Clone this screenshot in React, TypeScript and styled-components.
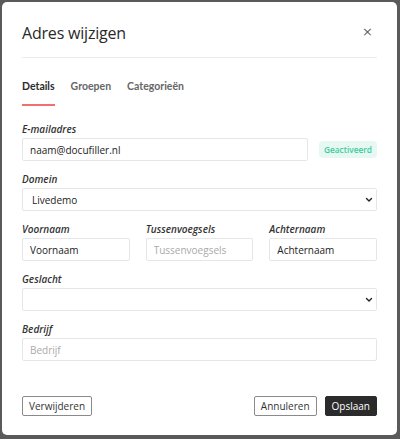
import React from "react";
import styled, { createGlobalStyle } from "styled-components";

const Global = createGlobalStyle`
  html, body { margin: 0; padding: 0; }
  body {
    background: #5a5a5a;
    font-family: "Open Sans", "Noto Sans", sans-serif;
    color: #222;
  }
  * { box-sizing: border-box; }
`;

const Backdrop = styled.div`
  width: 400px;
  height: 439px;
  padding: 2px 3px 4px 2px;
`;

const Modal = styled.div`
  background: #fff;
  border-radius: 5px;
  height: 100%;
  padding: 0 20px;
  display: flex;
  flex-direction: column;
`;

const Header = styled.div`
  display: flex;
  align-items: center;
  justify-content: space-between;
  height: 56px;
  padding-top: 6px;
  border-bottom: 1px solid #ececec;
`;

const Title = styled.h1`
  margin: 0;
  font-size: 16px;
  font-weight: 500;
  color: #2a2a2a;
  letter-spacing: -0.2px;
`;

const Close = styled.button`
  border: none;
  background: none;
  padding: 0;
  margin-right: 4px;
  margin-top: -3px;
  font-size: 13px;
  color: #666;
  line-height: 1;
  font-family: "DejaVu Sans", sans-serif;
  cursor: pointer;
`;

const Tabs = styled.div`
  display: flex;
  gap: 16px;
  margin-top: 21px;
`;

const Tab = styled.div<{ $active?: boolean }>`
  font-family: "Lato", "Open Sans", sans-serif;
  font-size: 10.5px;
  font-weight: 700;
  color: ${(p) => (p.$active ? "#2b2b2b" : "#666")};
  padding-bottom: 10px;
  line-height: 15px;
  border-bottom: 2px solid ${(p) => (p.$active ? "#f07070" : "transparent")};
`;

const Form = styled.div`
  display: flex;
  flex-direction: column;
  gap: 11px;
  margin-top: 16px;
`;

const Field = styled.div`
  display: flex;
  flex-direction: column;
  gap: 2px;
  min-width: 0;
`;

const Label = styled.label`
  font-size: 10px;
  font-style: italic;
  font-weight: 600;
  color: #333;
  line-height: 14px;
`;

const Row = styled.div<{ $cols?: string; $gap?: number }>`
  display: grid;
  grid-template-columns: ${(p) => p.$cols || "1fr"};
  gap: ${(p) => p.$gap ?? 16}px;
  align-items: end;
`;

const Input = styled.input`
  width: 100%;
  height: 23px;
  border: 1px solid #e6e6e6;
  border-radius: 2px;
  padding: 0 7px;
  font-family: "Open Sans", sans-serif;
  font-size: 10px;
  color: #222;
  outline: none;
  &::placeholder { color: #aaa; }
`;

const SelectBox = styled.div`
  height: 23px;
  border: 1px solid #e6e6e6;
  border-radius: 2px;
  padding: 0 3px 0 9px;
  display: flex;
  align-items: center;
  justify-content: space-between;
  font-size: 10px;
  color: #222;
`;

const Badge = styled.span`
  justify-self: end;
  align-self: center;
  background: #e7f8f2;
  color: #3ccb9f;
  font-size: 8.3px;
  font-weight: 600;
  padding: 2px 5px;
  border-radius: 4px;
  line-height: 13px;
`;

const Footer = styled.div`
  display: flex;
  align-items: center;
  gap: 8px;
  margin-top: auto;
  margin-bottom: 19px;
`;

const Spacer = styled.div`
  flex: 1;
`;

const Button = styled.button<{ $primary?: boolean }>`
  height: 20px;
  padding: 0 6px;
  border-radius: 2px;
  font-family: "Open Sans", sans-serif;
  font-size: 10px;
  border: 1px solid ${(p) => (p.$primary ? "#2b2b2b" : "#8a8a8a")};
  background: ${(p) => (p.$primary ? "#2b2b2b" : "#fff")};
  color: ${(p) => (p.$primary ? "#fff" : "#333")};
  cursor: pointer;
`;

const Chevron = () => (
  <svg width="8" height="6" viewBox="0 0 8 6" fill="none">
    <path d="M1.5 1.5 L4 4 L6.5 1.5" stroke="#222" strokeWidth="1.4" strokeLinecap="round" strokeLinejoin="round" />
  </svg>
);

export default function App() {
  return (
    <>
      <Global />
      <Backdrop>
        <Modal>
          <Header>
            <Title>Adres wijzigen</Title>
            <Close aria-label="Sluiten">×</Close>
          </Header>
          <Tabs>
            <Tab $active>Details</Tab>
            <Tab>Groepen</Tab>
            <Tab>Categorieën</Tab>
          </Tabs>
          <Form>
            <Field>
              <Label>E-mailadres</Label>
              <Row $cols="1fr auto" $gap={11}>
                <Input defaultValue="naam@docufiller.nl" />
                <Badge>Geactiveerd</Badge>
              </Row>
            </Field>
            <Field>
              <Label>Domein</Label>
              <SelectBox>
                <span>Livedemo</span>
                <Chevron />
              </SelectBox>
            </Field>
            <Row $cols="1fr 1fr 1fr">
              <Field>
                <Label>Voornaam</Label>
                <Input defaultValue="Voornaam" />
              </Field>
              <Field>
                <Label>Tussenvoegsels</Label>
                <Input placeholder="Tussenvoegsels" />
              </Field>
              <Field>
                <Label>Achternaam</Label>
                <Input defaultValue="Achternaam" />
              </Field>
            </Row>
            <Field>
              <Label>Geslacht</Label>
              <SelectBox>
                <span />
                <Chevron />
              </SelectBox>
            </Field>
            <Field>
              <Label>Bedrijf</Label>
              <Input placeholder="Bedrijf" />
            </Field>
          </Form>
          <Footer>
            <Button>Verwijderen</Button>
            <Spacer />
            <Button>Annuleren</Button>
            <Button $primary>Opslaan</Button>
          </Footer>
        </Modal>
      </Backdrop>
    </>
  );
}
